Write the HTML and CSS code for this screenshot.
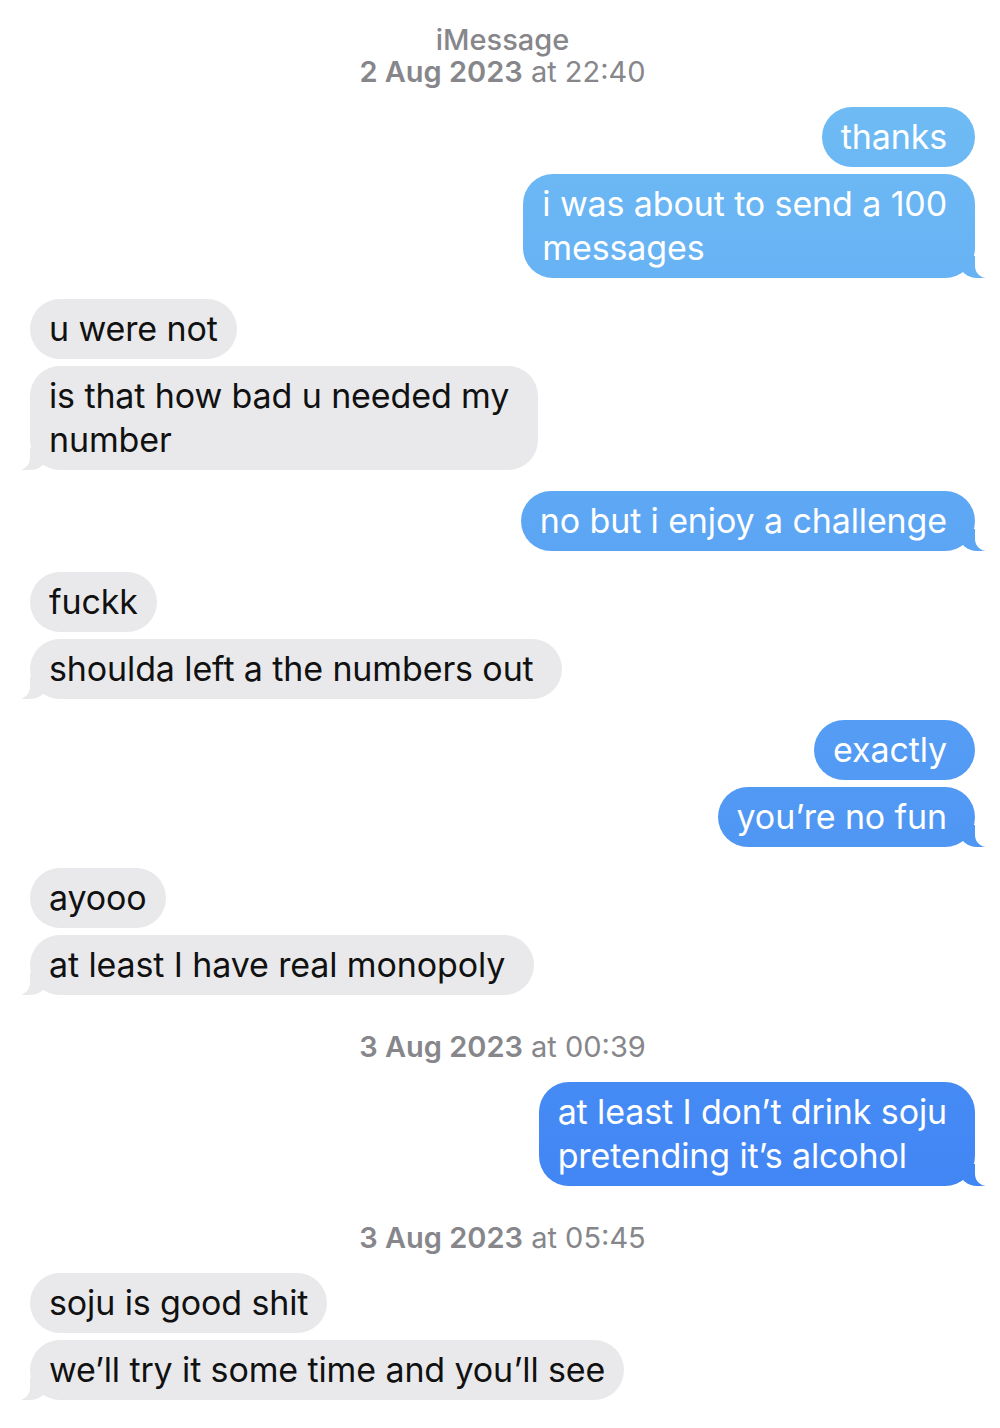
FILE: index.html
```
<!DOCTYPE html>
<html lang="en">
<head>
<meta charset="utf-8">
<title>iMessage</title>
<link rel="stylesheet" href="styles.css">
</head>
<body>
<div class="thread">
  <div class="header">
    <div class="service">iMessage</div>
    <div class="stamp-line"><b>2 Aug 2023</b> at 22:40</div>
  </div>

  <div class="group">
    <div class="bubble sent">thanks</div>
    <div class="bubble sent tail">i was about to send a 100<br>messages</div>
  </div>

  <div class="group">
    <div class="bubble recv">u were not</div>
    <div class="bubble recv tail">is that how bad u needed my <br>number</div>
  </div>

  <div class="group">
    <div class="bubble sent tail">no but i enjoy a challenge</div>
  </div>

  <div class="group">
    <div class="bubble recv">fuckk</div>
    <div class="bubble recv tail">shoulda left a the numbers out </div>
  </div>

  <div class="group">
    <div class="bubble sent">exactly</div>
    <div class="bubble sent tail">you’re no fun</div>
  </div>

  <div class="group">
    <div class="bubble recv">ayooo</div>
    <div class="bubble recv tail">at least I have real monopoly </div>
  </div>

  <div class="stamp"><b>3 Aug 2023</b> at 00:39</div>

  <div class="group">
    <div class="bubble sent tail">at least I don’t drink soju<br>pretending it’s alcohol</div>
  </div>

  <div class="stamp"><b>3 Aug 2023</b> at 05:45</div>

  <div class="group">
    <div class="bubble recv">soju is good shit</div>
    <div class="bubble recv tail">we’ll try it some time and you’ll see</div>
  </div>
</div>
</body>
</html>
```

FILE: styles.css
```
html, body {
  margin: 0;
  padding: 0;
  background: #ffffff;
}

body {
  font-family: Inter, "Noto Sans", "Liberation Sans", sans-serif;
  -webkit-font-smoothing: antialiased;
}

.thread {
  display: flex;
  flex-direction: column;
  padding: 24px 25px 0 30px;
}

.header {
  text-align: center;
  color: #86868b;
  font-size: 29px;
  line-height: 32px;
  margin-bottom: 19px;
}

.service {
  font-weight: 500;
}

.stamp-line b,
.stamp b {
  font-weight: 600;
}

.stamp {
  text-align: center;
  color: #86868b;
  font-size: 29px;
  line-height: 32px;
  margin: 15px 0 19px;
}

.group {
  display: flex;
  flex-direction: column;
  gap: 7px;
  margin-bottom: 21px;
}

.bubble {
  position: relative;
  font-size: 34px;
  line-height: 44px;
  letter-spacing: -0.12px;
  padding: 8px 19px;
  border-radius: 30px;
  white-space: pre;
}

.sent {
  align-self: flex-end;
  color: #ffffff;
  padding-right: 28px;
  background: linear-gradient(180deg, #73c0f4 0px, #377af4 1428px) fixed;
}

.recv {
  align-self: flex-start;
  color: #111111;
  background: #e9e9eb;
}

.tail::before,
.tail::after {
  content: "";
  position: absolute;
  bottom: 0;
  height: 22px;
}

.sent.tail::before {
  right: -10px;
  width: 26px;
  background: linear-gradient(180deg, #73c0f4 0px, #377af4 1428px) fixed;
  border-bottom-left-radius: 18px 16px;
}

.sent.tail::after {
  right: -30px;
  width: 30px;
  background: #ffffff;
  border-bottom-left-radius: 12px;
}

.recv.tail::before {
  left: -8px;
  width: 26px;
  background: #e9e9eb;
  border-bottom-right-radius: 18px 16px;
}

.recv.tail::after {
  left: -30px;
  width: 30px;
  background: #ffffff;
  border-bottom-right-radius: 12px;
}
```
